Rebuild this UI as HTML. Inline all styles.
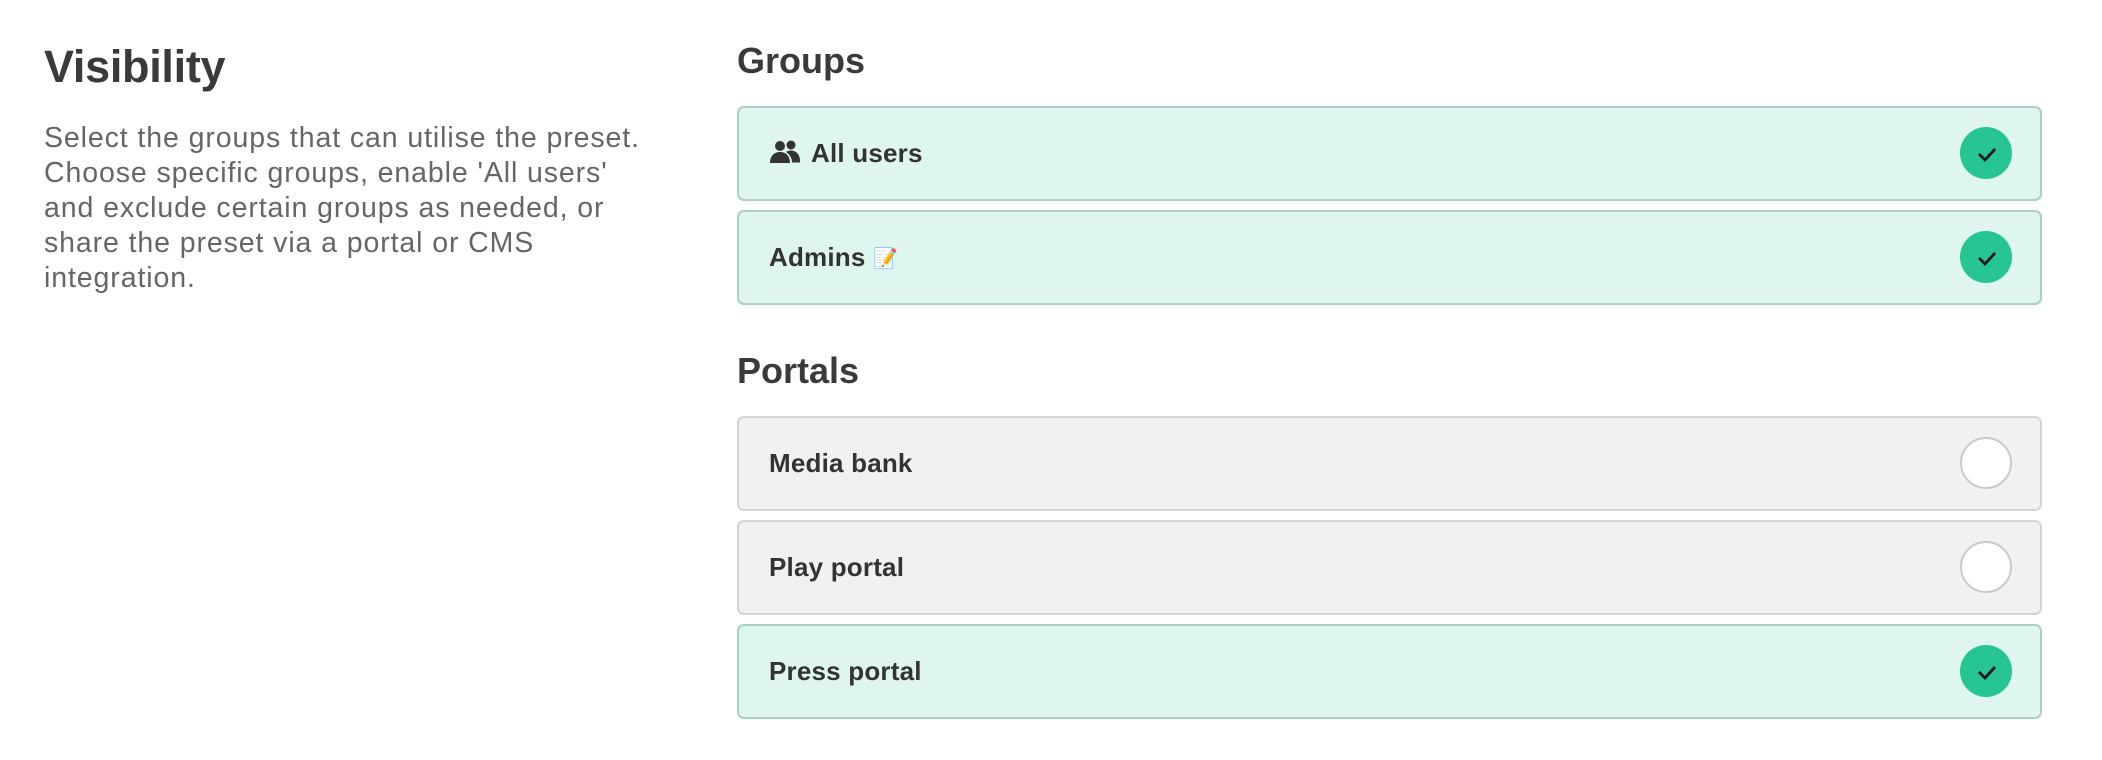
<!DOCTYPE html>
<html><head><style>
body{margin:0;width:2102px;height:760px;background:#fff;font-family:"Liberation Sans",sans-serif;position:relative;overflow:hidden}
.abs{position:absolute}
h1{position:absolute;left:44px;top:41px;margin:0;font-size:45px;font-weight:600;color:#3a3a3a;letter-spacing:-0.3px}
.desc{left:44px;top:121px;font-size:28.5px;letter-spacing:0.9px;line-height:35px;color:#666}
.h2{left:737px;font-size:36px;font-weight:600;color:#3a3a3a}
.card{position:absolute;left:737px;width:1301px;height:91px;border:2px solid #a9d1c4;border-radius:7px;background:#def6ef;box-sizing:content-box}
.card.off{background:#f1f1f1;border-color:#d4d4d4}
.lbl{position:absolute;left:30px;top:0;line-height:91px;font-size:26px;font-weight:bold;color:#333;letter-spacing:0.2px}
.c{position:absolute;left:1221px;top:19px;width:52px;height:52px;border-radius:50%;background:#27c593}
.off .c{background:#fff;border:2px solid #c9c9c9;width:48px;height:48px}
.em{font-size:20px;vertical-align:1px}
</style></head><body>
<h1>Visibility</h1>
<div class="abs desc">Select the groups that can utilise the preset.<br>Choose specific groups, enable 'All users'<br>and exclude certain groups as needed, or<br>share the preset via a portal or CMS<br>integration.</div>
<div class="abs h2" style="top:40px">Groups</div>
<div class="card" style="top:106px"><div class="lbl"><svg width="32" height="26" viewBox="0 0 32 26" style="vertical-align:-3px;margin-right:10px"><circle cx="11" cy="7" r="5" fill="#333"/><circle cx="22" cy="6" r="4.5" fill="#333"/><path d="M1 24c0-7 4-11 10-11s10 4 10 11z" fill="#333"/><path d="M17 13c1.5-1 3-1.5 5-1.5 5 0 9 4 9 10v2h-8c0-4-2-8-6-10.5z" fill="#333"/></svg>All users</div><div class="c"><svg width="52" height="52"><path d="M19 27l6 6 10-11" stroke="#1a1a1a" stroke-width="2.8" fill="none"/></svg></div></div>
<div class="card" style="top:210px"><div class="lbl">Admins <span class="em">📝</span></div><div class="c"><svg width="52" height="52"><path d="M19 27l6 6 10-11" stroke="#1a1a1a" stroke-width="2.8" fill="none"/></svg></div></div>
<div class="abs h2" style="top:350px">Portals</div>
<div class="card off" style="top:416px"><div class="lbl">Media bank</div><div class="c"></div></div>
<div class="card off" style="top:520px"><div class="lbl">Play portal</div><div class="c"></div></div>
<div class="card" style="top:624px"><div class="lbl">Press portal</div><div class="c"><svg width="52" height="52"><path d="M19 27l6 6 10-11" stroke="#1a1a1a" stroke-width="2.8" fill="none"/></svg></div></div>
</body></html>
